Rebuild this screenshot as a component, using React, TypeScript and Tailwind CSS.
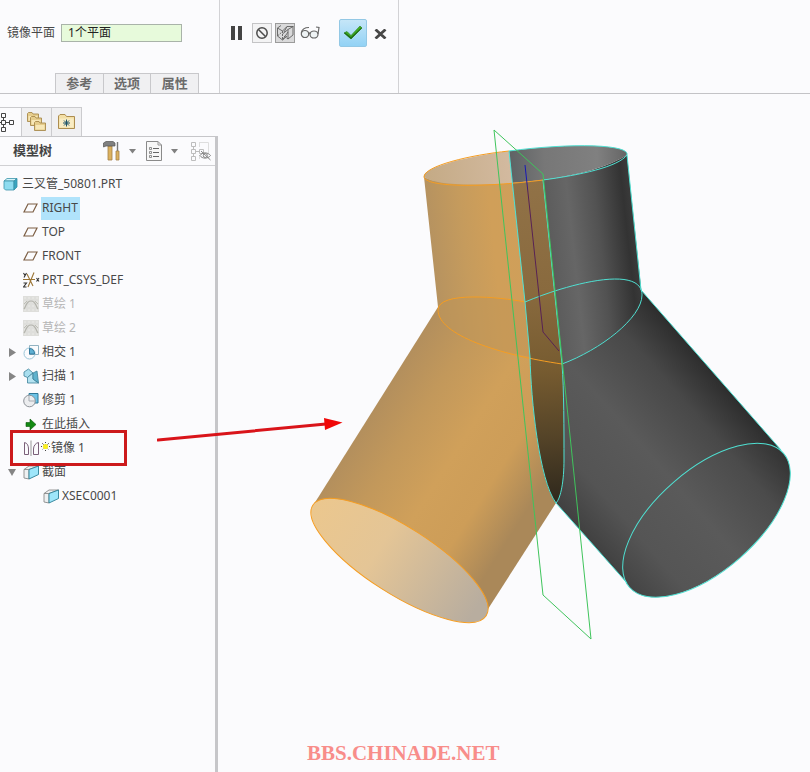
import type { ReactNode } from "react";

const PlaneIcon = () => (
    <svg width="16" height="16" viewBox="0 0 16 16" fill="none" stroke="#7d5f45" strokeWidth="1.2">
        <path d="M5 4H14L10 12H1Z" />
    </svg>
);

const PartIcon = () => (
    <svg width="15" height="16" viewBox="0 0 15 16" stroke="#3a93a8" strokeWidth="0.8" strokeLinejoin="round">
        <path d="M1 5L4 2.500H14L11 5Z" fill="#d5f5fb" />
        <path d="M1 5H11V14H2.500L1 12.500Z" fill="#8fdcf0" />
        <path d="M11 5L14 2.500V11L11 14Z" fill="#3aa5c0" />
    </svg>
);

const CsysIcon = () => (
    <svg width="17" height="18" viewBox="0 0 17 18" fill="none" strokeWidth="1.1">
        <path d="M0 8.5H12M4 3L10 15M11 1.5L5 16" stroke="#9a7434" />
        <path d="M0.5 2L2 4.5M3.5 2L1 6.5M0.5 12H3.5L0.5 16H3.5M13.5 7L16 10.5M16 7L13.5 10.5" stroke="#333" />
    </svg>
);

const SketchIcon = () => (
    <svg width="16" height="16" viewBox="0 0 16 16">
        <rect width="16" height="16" fill="#dededb" />
        <path d="M2 1V16M6 1V16M10 1V16M14 1V16" stroke="#ebebe8" strokeDasharray="2 2" />
        <path d="M1 13C3 11 3 5 8 5S13 11 15 13" fill="none" stroke="#b4b4ad" strokeWidth="1.2" />
        <path d="M1 8L4 5M15 8L12 5" stroke="#bdbdb5" />
    </svg>
);

const IntersectIcon = () => (
    <svg width="16" height="16" viewBox="0 0 16 16" fill="none">
        <path d="M6.500 1.500H15.500V10.500H6.500Z" stroke="#86aabb" strokeWidth="0.9" />
        <circle cx="6.500" cy="9.500" r="5.500" stroke="#9cc6d8" />
        <path d="M6.500 4.500A5 5 0 0 1 11.500 10H6.500Z" fill="#5fb0d3" stroke="#2b7396" strokeWidth="0.9" />
    </svg>
);

const SweepIcon = () => (
    <svg width="16" height="16" viewBox="0 0 16 16" stroke="#3d8299" strokeWidth="0.8" strokeLinejoin="round">
        <path d="M1 4L5.500 1L10 5L4.500 9.500L1 8Z" fill="#a9deee" />
        <path d="M4.500 9.500L10 5L10 11L15.500 15H4.500Z" fill="#b5e3f1" />
        <path d="M10 5L14 3L15.500 15L10 11Z" fill="#5fb2cd" />
    </svg>
);

const TrimIcon = () => (
    <svg width="16" height="16" viewBox="0 0 16 16">
        <path d="M6 1.5H15V11H6Z" fill="#6dc3e6" stroke="#2f7898" />
        <circle cx="6.5" cy="9" r="5.8" fill="#ecedef" stroke="#8d9298" />
        <path d="M6 3.5V9H12" fill="none" stroke="#a8adb3" />
    </svg>
);

const InsertIcon = () => (
    <svg width="16" height="16" viewBox="0 0 16 16">
        <path d="M3 6.5H7V3L13 8.5L7 14V10.5H3Z" fill="#138a13" stroke="#0a560a" strokeWidth="0.6" />
    </svg>
);

const MirrorIcon = () => (
    <svg width="16" height="16" viewBox="0 0 16 16" fill="none" stroke="#7a6079">
        <path d="M1.500 2.500C4.500 3 5.500 6 5.500 9V14.500H1.500ZM15.500 2.500C12.500 3 10.500 6 10.500 9V14.500H15.500Z" />
        <path d="M8 0.500V16" stroke="#999" />
    </svg>
);

const StarIcon = () => (
    <svg width="9" height="9" viewBox="0 0 9 9" className="mb-1">
        <path d="M4.5 0V9M0 4.5H9M1 1L8 8M8 1L1 8" stroke="#444" strokeDasharray="1 1" />
        <circle cx="4.5" cy="4.5" r="2.6" fill="#f8ee23" />
    </svg>
);

const SectionIcon = () => (
    <svg width="17" height="16" viewBox="0 0 17 16" strokeWidth="0.9" strokeLinejoin="round">
        <path d="M1 5.500L6 2H15.500L6 5.500V15L1 14Z" fill="#eef0f1" stroke="#8a8a8a" />
        <path d="M6 5.500L15.500 2V10.500L6 15Z" fill="#9ee6fa" stroke="#2b7f95" />
        <path d="M1 5.500H6" stroke="#8a8a8a" />
    </svg>
);

type TreeNode = {
    name: string;
    icon: ReactNode;
    muted?: boolean;
    selected?: boolean;
    toggle?: "open" | "closed";
    marked?: boolean;
    children?: TreeNode[];
};

const nodes: TreeNode[] = [
    { name: "RIGHT", icon: <PlaneIcon />, selected: true },
    { name: "TOP", icon: <PlaneIcon /> },
    { name: "FRONT", icon: <PlaneIcon /> },
    { name: "PRT_CSYS_DEF", icon: <CsysIcon /> },
    { name: "草绘 1", icon: <SketchIcon />, muted: true },
    { name: "草绘 2", icon: <SketchIcon />, muted: true },
    { name: "相交 1", icon: <IntersectIcon />, toggle: "closed" },
    { name: "扫描 1", icon: <SweepIcon />, toggle: "closed" },
    { name: "修剪 1", icon: <TrimIcon /> },
    { name: "在此插入", icon: <InsertIcon /> },
    { name: "镜像 1", icon: <MirrorIcon />, marked: true },
    { name: "截面", icon: <SectionIcon />, toggle: "open", children: [{ name: "XSEC0001", icon: <SectionIcon /> }] },
];

function Toggle({ state }: { state: "open" | "closed" }) {
    return (
        <button aria-label={state === "open" ? "折叠" : "展开"}>
            <svg width="9" height="9" viewBox="0 0 9 9" fill="#858585">
                <path d={state === "open" ? "M0 1H8L4 8Z" : "M1 0L8 4.5L1 9Z"} />
            </svg>
        </button>
    );
}

function Mark() {
    return (
        <>
            <div className="absolute -top-1.5 left-[10px] z-10 h-9 w-[117px] border-3 border-[#cc1a1c]" />
            <svg className="absolute -top-[21px] left-[157px] z-10" width="186" height="28" viewBox="157 415 186 28">
                <path d="M158 440L326 424" stroke="#d9141a" strokeWidth="3" strokeLinecap="round" />
                <path d="M324 418L342.500 422.500L325 430Z" fill="#f00808" />
            </svg>
        </>
    );
}

function TreeItem({ node, depth = 0 }: { node: TreeNode; depth?: number }) {
    return (
        <li>
            <div className={`relative flex h-6 items-center ${depth ? "pl-7" : "pl-2"} ${node.muted ? "text-[#b5b5b5]" : ""}`}>
                <span className="flex w-[15px]">{node.toggle && <Toggle state={node.toggle} />}</span>
                <span className="flex w-[18px]">{node.icon}</span>
                {node.marked && <StarIcon />}
                <span className={`flex h-[23px] items-center pr-0.5 pl-px ${node.selected ? "bg-[#b0e3fb]" : ""}`}>{node.name}</span>
                {node.marked && <Mark />}
            </div>
            {node.children && (
                <ul>
                    {node.children.map((child) => (
                        <TreeItem key={child.name} node={child} depth={depth + 1} />
                    ))}
                </ul>
            )}
        </li>
    );
}

function Dashboard() {
    return (
        <header className="flex h-[94px] border-b border-[#c3c3c6]">
            <div className="flex w-[220px] flex-col justify-between border-r border-[#d2d2d5] pt-6">
                <div className="flex h-[18px] items-center gap-[6px] pl-[7px]">
                    <label htmlFor="mirror-plane">镜像平面</label>
                    <input
                        id="mirror-plane"
                        defaultValue="1个平面"
                        className="h-[18px] w-[121px] border border-[#a9b3a9] bg-[#e7fadb] px-[6px] text-[#222] outline-none"
                    />
                </div>
                <nav className="ml-[55px] flex w-36 border-t border-l border-[#c8c8cb] text-[13px] font-bold text-[#6b6b6b]">
                    <button className="h-[19px] flex-1 border-r border-[#c8c8cb] bg-[#f0f0f2]">参考</button>
                    <button className="h-[19px] flex-1 border-r border-[#c8c8cb] bg-[#f0f0f2]">选项</button>
                    <button className="h-[19px] flex-1 border-r border-[#c8c8cb] bg-[#f0f0f2]">属性</button>
                </nav>
            </div>
            <div className="flex w-[179px] items-start border-r border-[#d2d2d5] pt-[19px]">
                <div className="flex h-7 items-center pl-[10px]">
                    <button aria-label="暂停">
                        <svg width="13" height="14" viewBox="0 0 13 14" fill="#444">
                            <path d="M1 0H5V14H1ZM8 0H12V14H8Z" />
                        </svg>
                    </button>
                    <button aria-label="无预览" className="ml-[9px] flex size-5 items-center justify-center border border-[#c4c4c6] bg-[#f3f3f4]">
                        <svg width="14" height="14" viewBox="0 0 14 14" fill="none" stroke="#4b4b4b" strokeWidth="1.5">
                            <circle cx="7" cy="7" r="5.2" />
                            <path d="M3.500 3.500L10.500 10.500" />
                        </svg>
                    </button>
                    <button aria-label="分离预览" className="ml-[3px] flex size-5 items-center justify-center border border-[#9b9b9b] bg-[#d9d9da]">
                        <svg width="18" height="18" viewBox="0 0 18 18" fill="none" stroke="#606060" strokeWidth="0.9">
                            <path d="M1.500 4L5 1.500M1.500 4L6.500 7L11 2.500H17.500M1.500 4V12L6.500 16L11 12M6.500 16L12 8M11 2.500L8 8M12 5.500L17 2.500V11L12 15V5.500L6.500 10" />
                            <path d="M1.500 12L6 8M6.500 7V16M12 15L8 12" strokeDasharray="2 1" />
                        </svg>
                    </button>
                    <button aria-label="眼镜预览" className="ml-[5px]">
                        <svg width="20" height="14" viewBox="0 0 20 14" fill="none" stroke="#666" strokeWidth="1.2">
                            <ellipse cx="5" cy="8" rx="3.700" ry="3.500" fill="#eef3f5" />
                            <ellipse cx="14" cy="8.500" rx="4" ry="3.500" fill="#eef3f5" />
                            <path d="M1.300 7C2 3 5 1.500 9 1.500M8.700 7.500C9 6.500 9.800 7 10 8M18 8L19 1.500L16 1" />
                        </svg>
                    </button>
                    <button aria-label="确定" className="ml-[19px] flex size-7 items-center justify-center rounded-xs border border-[#93c8e5] bg-linear-to-b from-[#c5e6f8] to-[#92d2f5]">
                        <svg width="20" height="16" viewBox="0 0 20 16">
                            <path d="M1 8L4 6.500L8 10.500L17 1L19 3L8 14Z" fill="#3fae22" stroke="#2a7a1c" strokeWidth="0.600" />
                            <path d="M8 14L19 3L18.500 2.500L8 12L2 7.500L1 8Z" fill="#1f6a15" />
                        </svg>
                    </button>
                    <button aria-label="取消" className="ml-[7px] pt-[2px]">
                        <svg width="13" height="10" viewBox="0 0 13 10" stroke="#474747" strokeWidth="2.800">
                            <path d="M1.500 0.500L11.500 9.500M11.500 0.500L1.500 9.500" />
                        </svg>
                    </button>
                </div>
            </div>
        </header>
    );
}

const Folder = ({ x, y }: { x: number; y: number }) => (
    <g transform={`translate(${x} ${y})`}>
        <path d="M0.500 1.500L1.500 0.500H5L6 2H11.500V9.500H0.500Z" fill="#e6cd8c" stroke="#a88a4d" strokeWidth="0.900" />
        <path d="M1.500 4H10.500V8.500H1.500Z" fill="#f7e7b7" />
    </g>
);

function SidebarTabs() {
    return (
        <div className="flex h-[29px]">
            <button aria-label="模型树" className="flex w-[22px] items-center border-t border-r border-[#cbcbce]">
                <svg width="15" height="20" viewBox="0 0 15 20" fill="none" stroke="#454545">
                    <path d="M1.500 1.500H5.500V5.500H1.500ZM1.500 8.500H5.500V12.500H1.500ZM1.500 15.500H5.500V19.500H1.500ZM9.500 8.500H13.500V12.500H9.500ZM3.500 5.500V8.500M3.500 12.500V15.500M5.500 10.500H9.500M0 10.500H1.500" />
                </svg>
            </button>
            <button aria-label="文件夹浏览器" className="flex w-[30px] items-center justify-center border-t border-r border-[#cbcbce] bg-[#f0f0f2]">
                <svg width="20" height="20" viewBox="0 0 20 20">
                    <Folder x={0} y={0} />
                    <Folder x={3} y={4} />
                    <Folder x={7} y={9} />
                </svg>
            </button>
            <button aria-label="收藏夹" className="flex w-[30px] items-center justify-center border-t border-r border-[#cbcbce] bg-[#f0f0f2]">
                <svg width="18" height="16" viewBox="0 0 18 16">
                    <path d="M0.500 2L2 0.500H7L8.500 2.500H16.500V14.500H0.500Z" fill="#f3dfa6" stroke="#ad8d50" />
                    <path d="M1.500 4.500H15.500V13.500H1.500Z" fill="#f9ecc3" />
                    <path d="M8.500 5.500V12.500M5 9H12M6 6.500L11 11.500M11 6.500L6 11.500" stroke="#1d5368" />
                </svg>
            </button>
        </div>
    );
}

const Caret = () => (
    <svg width="7" height="5" viewBox="0 0 7 5" fill="#808080">
        <path d="M0 0H7L3.500 4.500Z" />
    </svg>
);

function ModelTree() {
    return (
        <aside className="flex w-[218px] shrink-0 flex-col pt-[13px]">
            <SidebarTabs />
            <div className="flex-1 border-t border-r-3 border-[#c6c6c9]">
                <div className="flex h-[29px] items-center border-b border-[#d0d0d3] pl-[13px]">
                    <h2 className="w-[90px] text-[13px] font-bold text-[#444]">模型树</h2>
                    <button aria-label="设置" className="flex items-center gap-[8px]">
                        <svg width="18" height="20" viewBox="0 0 18 20">
                            <path d="M5 5H9V19H5Z" fill="#dcb25f" stroke="#a58248" strokeWidth="0.800" />
                            <path d="M0.500 2L3 0.500H10L12 2V5H3L0.500 6Z" fill="#808080" stroke="#555" strokeWidth="0.700" />
                            <path d="M14.500 1V10" stroke="#777" strokeWidth="1.400" />
                            <path d="M13 10H16V19H13Z" fill="#dcb25f" stroke="#a58248" strokeWidth="0.800" />
                        </svg>
                        <Caret />
                    </button>
                    <button aria-label="显示" className="ml-[10px] flex items-center gap-[8px]">
                        <svg width="17" height="20" viewBox="0 0 17 20" fill="none">
                            <path d="M0.500 0.500H12L15.500 4V19.500H0.500Z" fill="#f7f7f7" stroke="#8a8a8a" />
                            <path d="M12 0.500V4H15.500" stroke="#999" />
                            <path d="M7 7.500H13M7 11.500H13M7 15.500H13" stroke="#666" />
                            <path d="M3.500 6.500H5.500V8.500H3.500ZM3.500 10.500H5.500V12.500H3.500ZM3.500 14.500H5.500V16.500H3.500Z" stroke="#777" strokeWidth="0.800" />
                        </svg>
                        <Caret />
                    </button>
                    <button aria-label="过滤树" className="ml-[12px]">
                        <svg width="22" height="20" viewBox="0 0 22 20" fill="none" stroke="#bdbdbd">
                            <path d="M1.500 1.500H5.500V5.500H1.500ZM1.500 8.500H5.500V12.500H1.500ZM1.500 15.500H5.500V19.500H1.500ZM9.500 8.500H13.500V12.500H9.500ZM3.500 5.500V8.500M3.500 12.500V15.500M5.500 10.500H9.500" />
                            <path d="M9 1.500H18.500V12M9.500 2V6M9.500 14V18" stroke="#dedede" />
                            <path d="M10 14.500C12 11 18 11 20.500 14.500C18 18 12 18 10 14.500ZM11 10L20.500 19" stroke="#858585" />
                            <circle cx="15.300" cy="14.500" r="2" stroke="#858585" />
                        </svg>
                    </button>
                </div>
                <div className="pt-[6px]">
                    <div className="flex h-6 items-center pl-[3px]">
                        <PartIcon />
                        <span className="pl-1">三叉管_50801.PRT</span>
                    </div>
                    <ul>
                        {nodes.map((node) => (
                            <TreeItem key={node.name} node={node} />
                        ))}
                    </ul>
                </div>
            </div>
        </aside>
    );
}

function Model() {
    return (
        <svg className="block w-full" viewBox="218 94 592 678" fill="none">
            <defs>
                <linearGradient id="leftPipe" gradientUnits="userSpaceOnUse" x1="428" y1="240" x2="528" y2="230">
                    <stop offset="0" stopColor="#b59260" />
                    <stop offset="0.35" stopColor="#c59b5d" />
                    <stop offset="0.65" stopColor="#d09f59" />
                    <stop offset="1" stopColor="#cf9f5a" />
                </linearGradient>
                <linearGradient id="leftLeg" gradientUnits="userSpaceOnUse" x1="375" y1="407" x2="547" y2="517">
                    <stop offset="0" stopColor="#b38f5d" />
                    <stop offset="0.2" stopColor="#c2985b" />
                    <stop offset="0.45" stopColor="#d0a05a" />
                    <stop offset="0.68" stopColor="#cd9d58" />
                    <stop offset="0.9" stopColor="#aa8859" />
                    <stop offset="1" stopColor="#aa8859" />
                </linearGradient>
                <linearGradient id="leftFace" gradientUnits="userSpaceOnUse" x1="300" y1="560" x2="490" y2="560">
                    <stop offset="0" stopColor="#ebc78e" />
                    <stop offset="0.4" stopColor="#e4c596" />
                    <stop offset="1" stopColor="#b8ad9f" />
                </linearGradient>
                <linearGradient id="leftTop" gradientUnits="userSpaceOnUse" x1="424" y1="175" x2="512" y2="165">
                    <stop offset="0" stopColor="#c4aa85" />
                    <stop offset="1" stopColor="#d3baa0" />
                </linearGradient>
                <linearGradient id="rightPipe" gradientUnits="userSpaceOnUse" x1="545" y1="240" x2="636" y2="230">
                    <stop offset="0" stopColor="#5a5a5a" />
                    <stop offset="0.3" stopColor="#666666" />
                    <stop offset="0.6" stopColor="#525252" />
                    <stop offset="0.9" stopColor="#333333" />
                    <stop offset="1" stopColor="#3b3b3b" />
                </linearGradient>
                <linearGradient id="rightTop" gradientUnits="userSpaceOnUse" x1="509" y1="165" x2="627" y2="160">
                    <stop offset="0" stopColor="#5e6264" />
                    <stop offset="0.3" stopColor="#777777" />
                    <stop offset="0.75" stopColor="#808080" />
                    <stop offset="1" stopColor="#656565" />
                </linearGradient>
                <linearGradient id="rightLeg" gradientUnits="userSpaceOnUse" x1="590" y1="541" x2="743" y2="406">
                    <stop offset="0" stopColor="#414141" />
                    <stop offset="0.2" stopColor="#545454" />
                    <stop offset="0.5" stopColor="#5a5a5a" />
                    <stop offset="0.8" stopColor="#484848" />
                    <stop offset="1" stopColor="#2d2d2d" />
                </linearGradient>
                <linearGradient id="rightFace" gradientUnits="userSpaceOnUse" x1="604" y1="520" x2="809" y2="520">
                    <stop offset="0" stopColor="#444444" />
                    <stop offset="0.2" stopColor="#555555" />
                    <stop offset="0.5" stopColor="#5a5a5a" />
                    <stop offset="0.8" stopColor="#4b4b4b" />
                    <stop offset="1" stopColor="#333333" />
                </linearGradient>
                <linearGradient id="cut" gradientUnits="userSpaceOnUse" x1="530" y1="180" x2="550" y2="500">
                    <stop offset="0" stopColor="#917247" />
                    <stop offset="0.35" stopColor="#896a3e" />
                    <stop offset="0.6" stopColor="#765b30" />
                    <stop offset="0.8" stopColor="#554428" />
                    <stop offset="1" stopColor="#30291d" />
                </linearGradient>
                <linearGradient id="axis" gradientUnits="userSpaceOnUse" x1="525" y1="165" x2="529" y2="200">
                    <stop offset="0.4" stopColor="#1717b5" />
                    <stop offset="0.8" stopColor="#572154" />
                </linearGradient>
            </defs>

            {/* right half */}
            <path d="M556 503L627 583L706 520L781 450L641 290L600 270L543 330Z" fill="url(#rightLeg)" />
            <ellipse cx="706.500" cy="520.300" rx="102.100" ry="50.300" transform="rotate(-41 706.500 520.300)" fill="url(#rightFace)" />
            <path d="M543 180Q600 172 627 155L641.500 292C641 316 600 350 562 364Z" fill="url(#rightPipe)" />
            <path d="M509 151A103 16 -6.300 0 1 627 155Q600 172 543 180L512 183Z" fill="url(#rightTop)" />

            {/* left half */}
            <path d="M438 307L525 290L556 503L488 609L400 570L314 504Z" fill="url(#leftLeg)" />
            <path d="M424 177Q440 186 512 183L525 302L530 357Q438 340 438 307Z" fill="url(#leftPipe)" />
            <path d="M525 302C500 297 438 291 438 310C438 330 480 348 530 357Z" fill="#bd9355" opacity="0.5" />
            <path d="M509 151A103 16 -6.300 0 0 424 177Q440 188 512 183Z" fill="url(#leftTop)" />
            <ellipse cx="399.500" cy="560.500" rx="102.800" ry="33.400" transform="rotate(32.500 399.500 560.500)" fill="url(#leftFace)" stroke="#f59d22" />

            {/* cut surface */}
            <path d="M512 183L543 180L562 364C564 390 564 430 564 460C564 480 561 498 556 503C539 480 531 400 530 357L525 302Z" fill="url(#cut)" />

            <g stroke="#f59d22">
                <path d="M509 151C470 155 424 166 424 177C426 187 480 188 543 180" />
                <path d="M525 302C500 297 438 291 438 310C438 335 500 355 562 364" />
            </g>
            <g stroke="#4fe0d2">
                <path d="M509 151A103 16 -6.300 0 1 627 155C618 167 580 175 543 180" />
                <path d="M627 155L641 290L781 450M556 503L627 583" />
                <path d="M525 302C570 283 642 265 642 295C642 318 600 350 562 364" />
                <path d="M509 151L525 302L530 357C531 400 539 480 556 503C561 498 564 480 564 460C564 430 564 390 562 364L543 180" />
                <ellipse cx="706.500" cy="520.300" rx="102.100" ry="50.300" transform="rotate(-41 706.500 520.300)" />
            </g>
            <path d="M494 130L543 174L591 639L543 595Z" stroke="#3fc45c" />
            <path d="M525 165L543 332L559 351" stroke="url(#axis)" />
        </svg>
    );
}

export default function App() {
    return (
        <div className="flex min-h-screen flex-col bg-[#fbfbfd] font-['Noto_Sans','Noto_Sans_CJK_SC',sans-serif] text-[12px] text-[#484848]">
            <Dashboard />
            <div className="flex flex-1">
                <ModelTree />
                <main className="relative min-w-0 flex-1">
                    <Model />
                    <p className="absolute bottom-[7px] left-[89px] font-['Liberation_Serif',serif] text-[21px] leading-6 font-bold text-[#f88d8a]">BBS.CHINADE.NET</p>
                </main>
            </div>
        </div>
    );
}
